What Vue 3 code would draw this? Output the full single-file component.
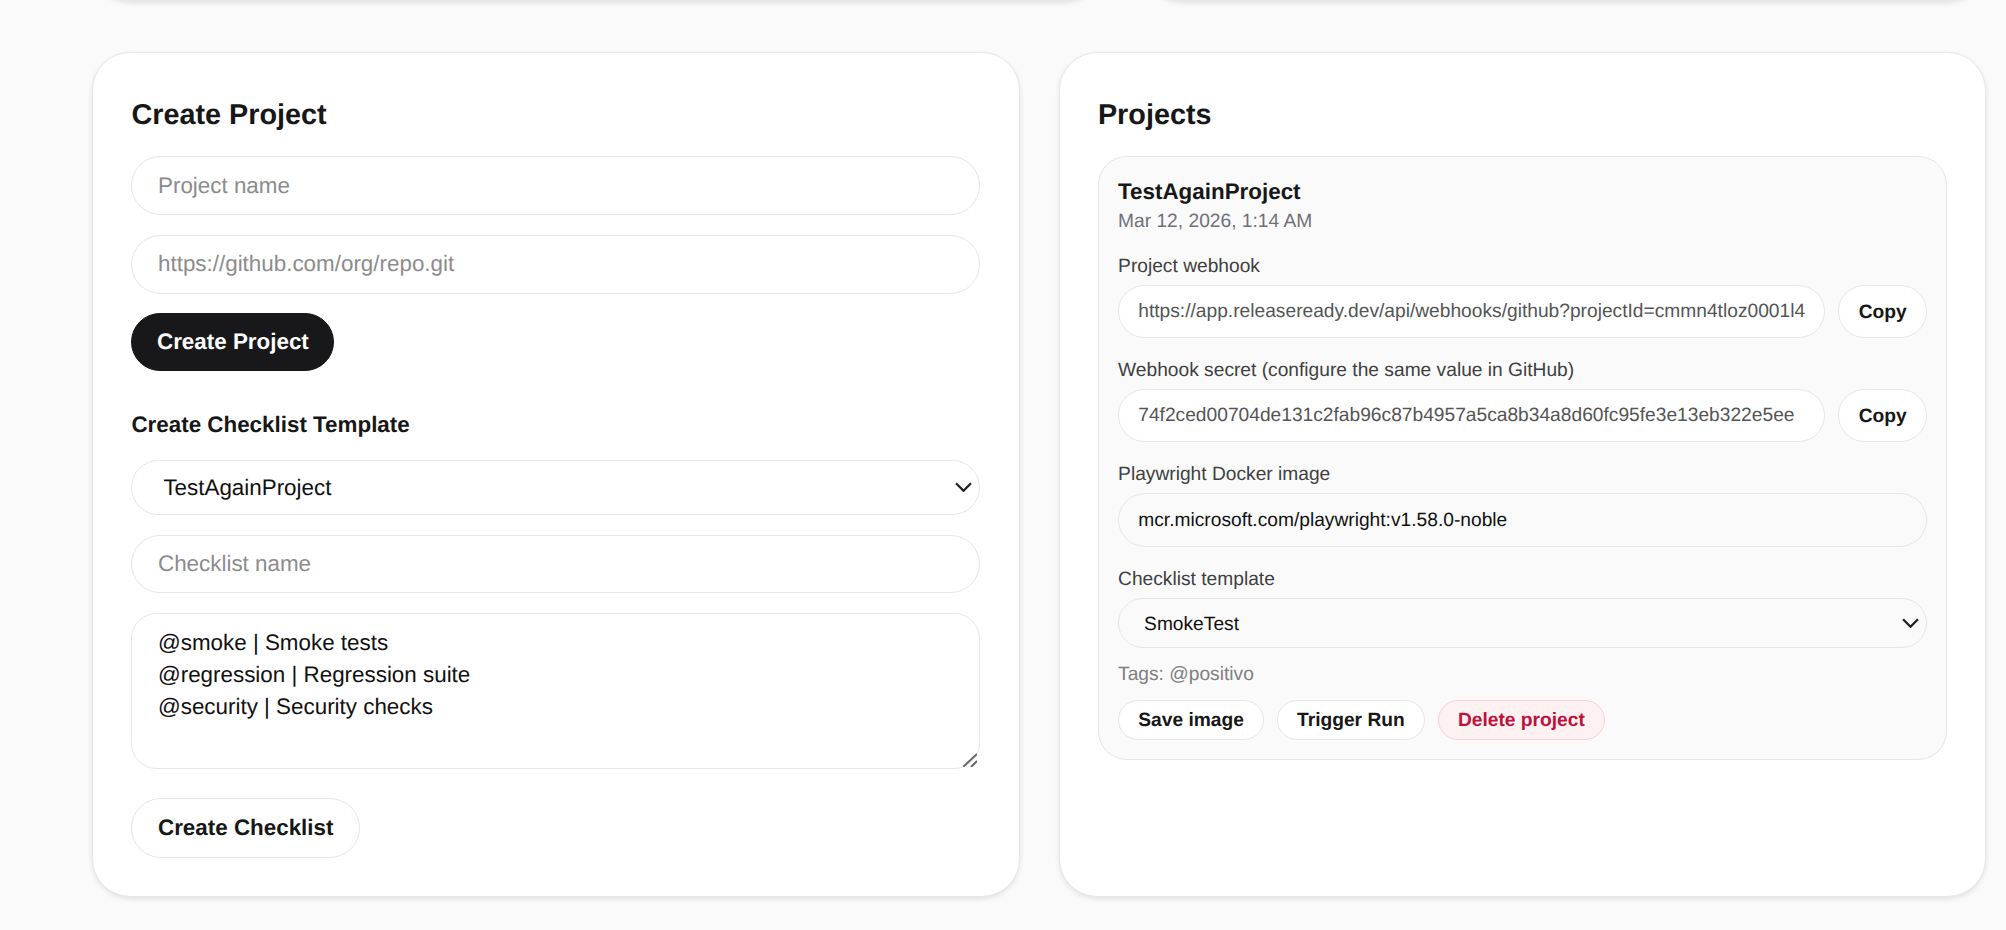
<script setup>
import { ref } from 'vue'

const projectName = ref('')
const repoUrl = ref('')
const checklistName = ref('')
const checklistTags = ref('@smoke | Smoke tests\n@regression | Regression suite\n@security | Security checks')
const dockerImage = ref('mcr.microsoft.com/playwright:v1.58.0-noble')
const webhookUrl = 'https://app.releaseready.dev/api/webhooks/github?projectId=cmmn4tloz0001l4xyzabcd'
const webhookSecret = '74f2ced00704de131c2fab96c87b4957a5ca8b34a8d60fc95fe3e13eb322e5ee'
</script>

<template>
  <div class="page">
    <div class="top-row">
      <div class="card stub"></div>
      <div class="card stub"></div>
    </div>

    <div class="grid">
      <section class="card">
        <h2 class="title">Create Project</h2>
        <div class="stack">
          <input v-model="projectName" class="field" placeholder="Project name" />
          <input v-model="repoUrl" class="field" placeholder="https://github.com/org/repo.git" />
          <div><button class="btn btn-dark">Create Project</button></div>
        </div>

        <h3 class="subtitle">Create Checklist Template</h3>
        <div class="stack">
          <div class="select-wrap">
            <select class="select">
              <option>TestAgainProject</option>
            </select>
            <svg class="chevron" viewBox="0 0 16 9"><path d="M1 1l7 7 7-7" /></svg>
          </div>
          <input v-model="checklistName" class="field" placeholder="Checklist name" />
          <div class="area-wrap">
            <textarea v-model="checklistTags" class="area"></textarea>
            <svg class="grip" viewBox="0 0 14 14"><path d="M0 14L14 1M8 14l6-6" /></svg>
          </div>
          <div class="create-row"><button class="btn">Create Checklist</button></div>
        </div>
      </section>

      <section class="card">
        <h2 class="title">Projects</h2>
        <div class="project">
          <div class="project-name">TestAgainProject</div>
          <div class="project-date">Mar 12, 2026, 1:14 AM</div>

          <label class="small-label first">Project webhook</label>
          <div class="copy-row">
            <input class="small-field readonly" :value="webhookUrl" readonly />
            <button class="small-btn copy">Copy</button>
          </div>

          <label class="small-label">Webhook secret (configure the same value in GitHub)</label>
          <div class="copy-row">
            <input class="small-field readonly" :value="webhookSecret" readonly />
            <button class="small-btn copy">Copy</button>
          </div>

          <label class="small-label">Playwright Docker image</label>
          <input v-model="dockerImage" class="small-field image" />

          <label class="small-label">Checklist template</label>
          <div class="select-wrap">
            <select class="select small">
              <option>SmokeTest</option>
            </select>
            <svg class="chevron" viewBox="0 0 16 9"><path d="M1 1l7 7 7-7" /></svg>
          </div>

          <div class="tags">Tags: @positivo</div>

          <div class="actions">
            <button class="small-btn action">Save image</button>
            <button class="small-btn action">Trigger Run</button>
            <button class="small-btn action danger">Delete project</button>
          </div>
        </div>
      </section>
    </div>
  </div>
</template>

<style>
html,
body {
  margin: 0;
  background: #fafafa;
}
</style>

<style scoped>
.page {
  height: 930px;
  overflow: hidden;
  padding: 0 20px 0 92px;
  box-sizing: border-box;
  font-family: "Liberation Sans", Arial, sans-serif;
  color: #171717;
  background: #fafafa;
  text-rendering: geometricPrecision;
}

.page input,
.page select,
.page textarea,
.page button {
  text-rendering: geometricPrecision;
}

.top-row {
  display: grid;
  grid-template-columns: 1.2fr 1fr;
  gap: 40px;
  margin-top: -99px;
}

.grid {
  display: grid;
  grid-template-columns: 1fr 1fr;
  gap: 39px;
  margin-top: 51px;
}

.card {
  box-sizing: border-box;
  height: 844.5px;
  padding: 38.4px;
  background: #fff;
  border: 1px solid #e8e8e8;
  border-radius: 38.4px;
  box-shadow: 0 2px 5px rgba(0, 0, 0, 0.1);
}

.card.stub {
  height: 100px;
}

.title {
  margin: 2px 0 18px;
  font-size: 28.8px;
  line-height: 44.8px;
  font-weight: 700;
}

.stack {
  display: flex;
  flex-direction: column;
  gap: 19.6px;
}

.field {
  box-sizing: border-box;
  width: 100%;
  height: 58.9px;
  padding: 0 25.6px;
  border: 1.5px solid #e6e6e6;
  border-radius: 29.5px;
  background: #fff;
  outline: none;
  font: 22.4px "Liberation Sans", Arial, sans-serif;
  color: #111;
}

.field::placeholder {
  color: #8c8c8c;
}

.btn {
  box-sizing: border-box;
  height: 59.9px;
  padding: 0 25.6px;
  border: 1.5px solid #e6e6e6;
  border-radius: 30px;
  background: #fff;
  font: 700 22.4px "Liberation Sans", Arial, sans-serif;
  color: #171717;
}

.btn-dark {
  height: 57.8px;
  padding: 0 24.6px;
  background: #18181a;
  border-color: #18181a;
  color: #fff;
}

.subtitle {
  margin: 36px 0 17px;
  font-size: 22.4px;
  line-height: 35.8px;
  font-weight: 700;
}

.select-wrap {
  position: relative;
}

.select {
  display: block;
  box-sizing: border-box;
  width: 100%;
  height: 55.2px;
  padding: 0 50px 0 31px;
  appearance: none;
  border: 1.5px solid #e6e6e6;
  border-radius: 27.6px;
  background: #fff;
  outline: none;
  font: 22.4px "Liberation Sans", Arial, sans-serif;
  color: #111;
}

.select.small {
  height: 49.9px;
  padding: 3px 50px 0 25px;
  border-radius: 25px;
  background: #fafafa;
  font-size: 19.2px;
}

.chevron {
  position: absolute;
  top: 50%;
  right: 8px;
  width: 17px;
  height: 10px;
  margin-top: -5px;
  fill: none;
  stroke: #222;
  stroke-width: 2.2;
}

.area-wrap {
  position: relative;
}

.area {
  display: block;
  box-sizing: border-box;
  width: 100%;
  height: 156.2px;
  padding: 12.6px 25.6px 12.8px;
  border: 1.5px solid #e6e6e6;
  border-radius: 25.6px;
  background: #fff;
  outline: none;
  resize: none;
  font: 22.4px/32px "Liberation Sans", Arial, sans-serif;
  color: #111;
}

.grip {
  position: absolute;
  right: 3px;
  bottom: 2.7px;
  width: 14px;
  height: 14px;
  fill: none;
  stroke: #666;
  stroke-width: 2;
}

.create-row {
  margin-top: 9px;
}

.project {
  box-sizing: border-box;
  padding: 19.2px 18.5px 19.2px 19.2px;
  background: #fafafa;
  border: 1.5px solid #e6e6e6;
  border-radius: 28.8px;
}

.project-name {
  font-size: 22.4px;
  line-height: 32px;
  font-weight: 700;
}

.project-date {
  margin-top: 1px;
  font-size: 19.2px;
  line-height: 25.6px;
  color: #71717a;
}

.small-label {
  display: block;
  margin: 18px 0 2.4px;
  font-size: 19.2px;
  line-height: 30.7px;
  color: #404040;
}

.small-label.first {
  margin-top: 17px;
}

.copy-row {
  display: flex;
  gap: 13.4px;
}

.small-field {
  box-sizing: border-box;
  width: 100%;
  height: 52.8px;
  padding: 2px 19.2px 0;
  border: 1.5px solid #e6e6e6;
  border-radius: 26.4px;
  outline: none;
  font: 19.2px "Liberation Sans", Arial, sans-serif;
}

.small-field.readonly {
  flex: 1;
  min-width: 0;
  background: #fff;
  color: #555;
}

.small-field.image {
  display: block;
  height: 53.7px;
  border-radius: 27px;
  background: #fafafa;
  color: #111;
}

.small-btn {
  box-sizing: border-box;
  padding: 2px 19.2px 0;
  border: 1.5px solid #e6e6e6;
  background: #fff;
  font: 700 19.2px "Liberation Sans", Arial, sans-serif;
  color: #171717;
}

.copy {
  flex: none;
  height: 52.8px;
  padding: 3px 19.5px 0;
  border-radius: 26.4px;
}

.tags {
  margin-top: 12px;
  font-size: 19.2px;
  line-height: 30px;
  color: #808080;
}

.actions {
  display: flex;
  gap: 12.8px;
  margin-top: 10px;
}

.action {
  height: 40px;
  border-radius: 20px;
}

.danger {
  background: #fdf1f2;
  border-color: #f9d0d6;
  color: #be123c;
}
</style>
